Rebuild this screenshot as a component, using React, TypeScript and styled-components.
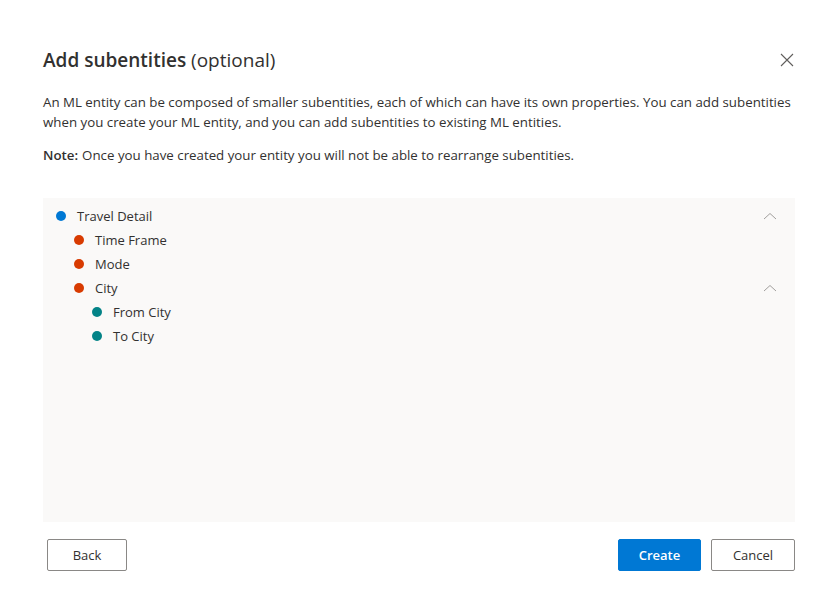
import React from 'react';
import styled, { createGlobalStyle } from 'styled-components';

const GlobalStyle = createGlobalStyle`
  body {
    margin: 0;
    background: #ffffff;
    font-family: "Open Sans", "Noto Sans", Arial, sans-serif;
    color: #323130;
  }
`;

const Dialog = styled.div`
  width: 834px;
  height: 615px;
  box-sizing: border-box;
  padding: 44px 39px 0 43px;
  display: flex;
  flex-direction: column;
`;

const Header = styled.div`
  display: flex;
  align-items: center;
  justify-content: space-between;
  height: 32px;
`;

const Title = styled.h1`
  margin: 0;
  font-size: 19px;
  font-weight: 600;
  color: #323130;
  span {
    font-weight: 400;
  }
`;

const CloseButton = styled.button`
  border: none;
  background: none;
  padding: 0;
  width: 14px;
  height: 14px;
  margin-right: 1px;
  cursor: pointer;
  display: flex;
`;

const Paragraph = styled.p`
  margin: 16px 0 0;
  font-size: 13.3px;
  line-height: 20px;
  color: #323130;
`;

const NoteText = styled.p`
  margin: 13px 0 0;
  font-size: 13.3px;
  line-height: 20px;
  b {
    font-weight: 600;
    margin-right: 4px;
  }
`;

const TreePanel = styled.div`
  margin-top: 33px;
  height: 324px;
  background: #faf9f8;
  padding: 6px 0 0 13px;
  box-sizing: border-box;
`;

const Row = styled.div<{ $level: number }>`
  display: flex;
  align-items: center;
  height: 24px;
  padding-left: ${({ $level }) => $level * 18}px;
  padding-right: 18px;
  font-size: 13px;
  color: #323130;
`;

const Dot = styled.span<{ $color: string }>`
  width: 10px;
  height: 10px;
  border-radius: 50%;
  background: ${({ $color }) => $color};
  margin-right: 11px;
  flex-shrink: 0;
`;

const Label = styled.span`
  flex: 1;
`;

const Footer = styled.div`
  margin-top: 17px;
  display: flex;
  align-items: center;
  padding-left: 4px;
`;

const Spacer = styled.div`
  flex: 1;
`;

const Btn = styled.button<{ $primary?: boolean; $w: number }>`
  width: ${({ $w }) => $w}px;
  height: 32px;
  border-radius: 2px;
  font-family: "Open Sans", "Noto Sans", Arial, sans-serif;
  font-size: 13px;
  font-weight: ${({ $primary }) => ($primary ? 600 : 400)};
  cursor: pointer;
  border: 1px solid ${({ $primary }) => ($primary ? '#0078d4' : '#8a8886')};
  background: ${({ $primary }) => ($primary ? '#0078d4' : '#ffffff')};
  color: ${({ $primary }) => ($primary ? '#ffffff' : '#323130')};
  & + & {
    margin-left: 10px;
  }
`;

const Chevron = () => (
  <svg width="14" height="8" viewBox="0 0 14 8">
    <path d="M1 7 L7 1.5 L13 7" fill="none" stroke="#a19f9d" strokeWidth="1" />
  </svg>
);

type Item = { label: string; level: number; color: string; expanded?: boolean };

const items: Item[] = [
  { label: 'Travel Detail', level: 0, color: '#0078d4', expanded: true },
  { label: 'Time Frame', level: 1, color: '#d83b01' },
  { label: 'Mode', level: 1, color: '#d83b01' },
  { label: 'City', level: 1, color: '#d83b01', expanded: true },
  { label: 'From City', level: 2, color: '#038387' },
  { label: 'To City', level: 2, color: '#038387' },
];

export default function App() {
  return (
    <>
      <GlobalStyle />
      <Dialog>
        <Header>
          <Title>
            Add subentities <span>(optional)</span>
          </Title>
          <CloseButton aria-label="Close">
            <svg width="14" height="14" viewBox="0 0 14 14">
              <path d="M1 1 L13 13 M13 1 L1 13" stroke="#605e5c" strokeWidth="1.1" />
            </svg>
          </CloseButton>
        </Header>
        <Paragraph>
          An ML entity can be composed of smaller subentities, each of which can have its own properties. You can add
          subentities when you create your ML entity, and you can add subentities to existing ML entities.
        </Paragraph>
        <NoteText>
          <b>Note:</b>Once you have created your entity you will not be able to rearrange subentities.
        </NoteText>
        <TreePanel>
          {items.map((item) => (
            <Row key={item.label} $level={item.level}>
              <Dot $color={item.color} />
              <Label>{item.label}</Label>
              {item.expanded && <Chevron />}
            </Row>
          ))}
        </TreePanel>
        <Footer>
          <Btn $w={80}>Back</Btn>
          <Spacer />
          <Btn $primary $w={83}>Create</Btn>
          <Btn $w={84}>Cancel</Btn>
        </Footer>
      </Dialog>
    </>
  );
}
